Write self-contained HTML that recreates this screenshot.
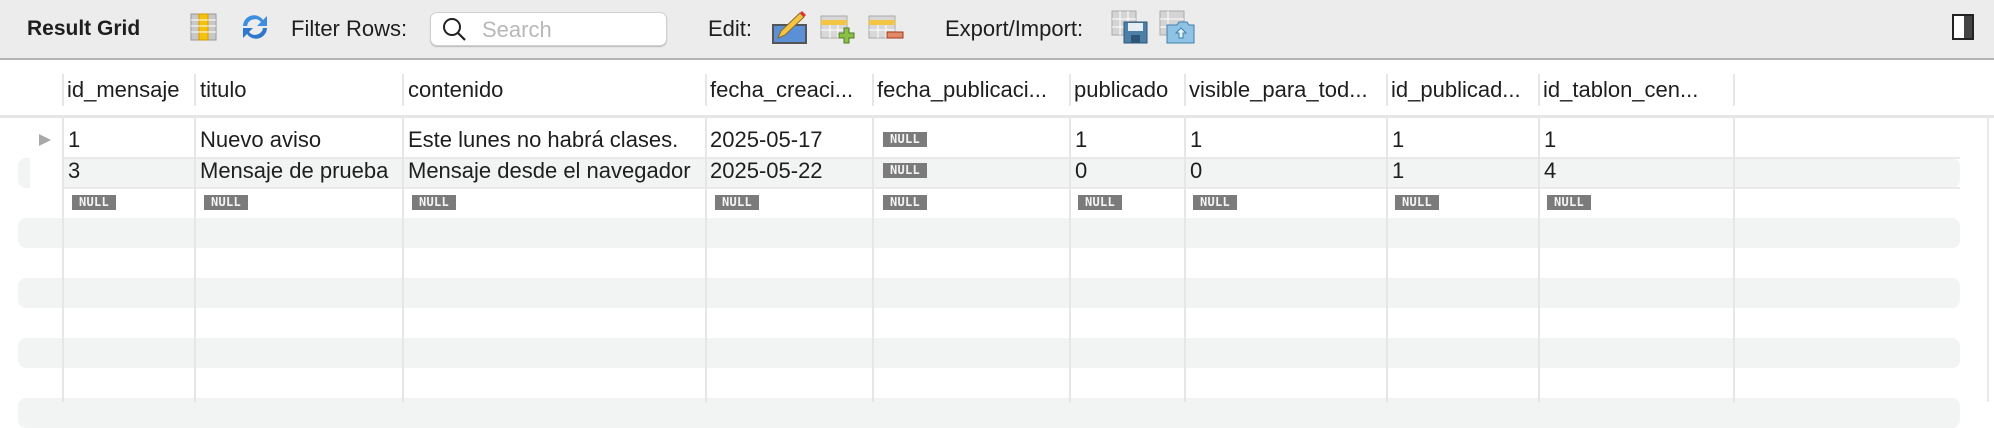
<!DOCTYPE html>
<html><head><meta charset="utf-8"><style>
*{margin:0;padding:0;box-sizing:border-box}
body{width:1994px;height:402px;overflow:hidden;background:#fff;font-family:"Liberation Sans",sans-serif;color:#1e1e1e;position:relative}
.tb{position:absolute;left:0;top:0;width:1994px;height:60px;background:#ececec;border-bottom:2px solid #b4b4b4}
.t{position:absolute;font-size:22px;top:16px;line-height:26px}
.abs{position:absolute}
.vl{position:absolute;width:2px;background:#e6e6e6}
.hd{position:absolute;top:77px;font-size:22px;line-height:26px}
.c{position:absolute;font-size:22px;line-height:26px}
.n{position:absolute;width:44px;height:15px;background:#7b7b7b;color:#f4f4f4;font-size:12px;font-weight:bold;line-height:15px;text-align:center;letter-spacing:0.3px;font-family:"DejaVu Sans Mono",monospace}
.band{position:absolute;left:18px;width:1942px;height:30px;background:#f2f3f3;border-radius:8px}
</style></head><body>
<div class="tb"></div>
<div class="t" style="left:27px;font-weight:bold;font-size:21px">Result Grid</div>
<svg class="abs" style="left:190px;top:13px" width="27" height="28" viewBox="0 0 27 28"><rect x="1" y="1" width="25" height="26" fill="#c8c8c8" stroke="#999"/><rect x="9" y="1" width="9" height="26" fill="#f4c20d" stroke="#d59a00"/><g stroke="#fff"><line x1="1" y1="7" x2="26" y2="7"/><line x1="1" y1="13" x2="26" y2="13"/><line x1="1" y1="19" x2="26" y2="19"/></g></svg>
<svg class="abs" style="left:239px;top:12px" width="32" height="30" viewBox="0 0 32 30"><path d="M4 14 A11 11 0 0 1 24 8 L28 4 L28 14 L18 14 L22 10 A8 8 0 0 0 8 14Z" fill="#3d8de0"/><path d="M28 16 A11 11 0 0 1 8 22 L4 26 L4 16 L14 16 L10 20 A8 8 0 0 0 24 16Z" fill="#2f77cc"/></svg>
<div class="t" style="left:291px">Filter Rows:</div>
<div class="abs" style="left:430px;top:12px;width:237px;height:34px;background:#fff;border:1px solid #d0d0d0;border-radius:7px;box-shadow:0 1px 1px #bbb"></div>
<svg class="abs" style="left:442px;top:17px" width="26" height="26" viewBox="0 0 26 26"><circle cx="10" cy="10" r="8" fill="none" stroke="#222" stroke-width="2"/><line x1="16" y1="16" x2="23" y2="23" stroke="#222" stroke-width="2.2"/></svg>
<div class="t" style="left:482px;color:#b8b8b8;top:17px">Search</div>
<div class="t" style="left:708px">Edit:</div>
<svg class="abs" style="left:772px;top:10px" width="36" height="34" viewBox="0 0 36 34"><rect x="1" y="15" width="33" height="18" fill="#5b8fd6" stroke="#555" stroke-width="2"/><path d="M6 28 L9 21 L28 3 L32 7 L13 25Z" fill="#f4c542" stroke="#8a6a2a"/><path d="M28 3 L30 1 L34 5 L32 7Z" fill="#d33"/></svg>
<svg class="abs" style="left:820px;top:14px" width="37" height="30" viewBox="0 0 37 30"><rect x="1" y="2" width="26" height="22" fill="#d8d8d8" stroke="#aaa"/><rect x="1" y="6" width="26" height="5" fill="#f4c542"/><g stroke="#fff"><line x1="1" y1="16" x2="27" y2="16"/><line x1="10" y1="11" x2="10" y2="24"/><line x1="18" y1="11" x2="18" y2="24"/></g><path d="M24 14h5v5h5v5h-5v5h-5v-5h-5v-5h5z" fill="#8cc04a" stroke="#4e7d22"/></svg>
<svg class="abs" style="left:868px;top:14px" width="37" height="30" viewBox="0 0 37 30"><rect x="1" y="2" width="26" height="22" fill="#d8d8d8" stroke="#aaa"/><rect x="1" y="6" width="26" height="5" fill="#f4c542"/><g stroke="#fff"><line x1="1" y1="16" x2="27" y2="16"/><line x1="10" y1="11" x2="10" y2="24"/><line x1="18" y1="11" x2="18" y2="24"/></g><rect x="19" y="18" width="16" height="6" fill="#e08a6a" stroke="#a03a1a"/></svg>
<div class="t" style="left:945px">Export/Import:</div>
<svg class="abs" style="left:1111px;top:10px" width="37" height="34" viewBox="0 0 37 34"><rect x="1" y="1" width="24" height="24" fill="#d4d4d4" stroke="#aaa"/><g stroke="#fff"><line x1="1" y1="9" x2="25" y2="9"/><line x1="1" y1="17" x2="25" y2="17"/><line x1="9" y1="1" x2="9" y2="25"/><line x1="17" y1="1" x2="17" y2="25"/></g><rect x="13" y="12" width="23" height="21" fill="#4e7fa6" stroke="#2d5578"/><rect x="17" y="13" width="15" height="8" fill="#e6eef5"/><rect x="20" y="25" width="9" height="8" fill="#2d5578"/></svg>
<svg class="abs" style="left:1159px;top:10px" width="37" height="34" viewBox="0 0 37 34"><rect x="1" y="1" width="24" height="24" fill="#d4d4d4" stroke="#aaa"/><g stroke="#fff"><line x1="1" y1="9" x2="25" y2="9"/><line x1="1" y1="17" x2="25" y2="17"/><line x1="9" y1="1" x2="9" y2="25"/></g><path d="M8 15h10l2 -3h8l2 3h5v18h-27z" fill="#8ec3e6" stroke="#3f7fa8"/><path d="M22 18l-5 5h3v5h4v-5h3z" fill="#e8f4fb" stroke="#3f7fa8"/></svg>
<div class="abs" style="left:1952px;top:14px;width:22px;height:26px;border:2px solid #222;background:linear-gradient(90deg,#fff 0 55%,#444 55% 100%)"></div>

<div class="abs" style="left:0;top:115px;width:1994px;height:3px;background:#e6e6e6"></div>
<div class="band" style="top:158px"></div>
<div class="abs" style="left:30px;top:158px;width:33px;height:30px;background:#fff"></div>
<div class="band" style="top:218px"></div>
<div class="band" style="top:278px"></div>
<div class="band" style="top:338px"></div>
<div class="band" style="top:398px"></div>
<div class="abs" style="left:63px;top:157px;width:1897px;height:2px;background:#eaeaea"></div>
<div class="abs" style="left:63px;top:187px;width:1897px;height:2px;background:#eaeaea"></div>
<div class="abs" style="left:1987px;top:118px;width:2px;height:284px;background:#eaeaea"></div>

<div class="vl" style="left:62px;top:74px;height:32px"></div><div class="vl" style="left:62px;top:118px;height:284px"></div>
<div class="vl" style="left:194px;top:74px;height:32px"></div><div class="vl" style="left:194px;top:118px;height:284px"></div>
<div class="vl" style="left:402px;top:74px;height:32px"></div><div class="vl" style="left:402px;top:118px;height:284px"></div>
<div class="vl" style="left:705px;top:74px;height:32px"></div><div class="vl" style="left:705px;top:118px;height:284px"></div>
<div class="vl" style="left:872px;top:74px;height:32px"></div><div class="vl" style="left:872px;top:118px;height:284px"></div>
<div class="vl" style="left:1069px;top:74px;height:32px"></div><div class="vl" style="left:1069px;top:118px;height:284px"></div>
<div class="vl" style="left:1184px;top:74px;height:32px"></div><div class="vl" style="left:1184px;top:118px;height:284px"></div>
<div class="vl" style="left:1386px;top:74px;height:32px"></div><div class="vl" style="left:1386px;top:118px;height:284px"></div>
<div class="vl" style="left:1538px;top:74px;height:32px"></div><div class="vl" style="left:1538px;top:118px;height:284px"></div>
<div class="vl" style="left:1733px;top:74px;height:32px"></div><div class="vl" style="left:1733px;top:118px;height:284px"></div>

<div class="hd" style="left:67px">id_mensaje</div>
<div class="hd" style="left:200px">titulo</div>
<div class="hd" style="left:408px">contenido</div>
<div class="hd" style="left:710px">fecha_creaci...</div>
<div class="hd" style="left:877px">fecha_publicaci...</div>
<div class="hd" style="left:1074px">publicado</div>
<div class="hd" style="left:1189px">visible_para_tod...</div>
<div class="hd" style="left:1391px">id_publicad...</div>
<div class="hd" style="left:1543px">id_tablon_cen...</div>

<svg class="abs" style="left:38px;top:133px" width="14" height="14"><path d="M1 1 L13 7 L1 13Z" fill="#a8a8a8"/></svg>
<div class="c" style="top:127px;left:68px">1</div>
<div class="c" style="top:127px;left:200px">Nuevo aviso</div>
<div class="c" style="top:127px;left:408px">Este lunes no habrá clases.</div>
<div class="c" style="top:127px;left:710px">2025-05-17</div>
<div class="n" style="top:132px;left:883px">NULL</div>
<div class="c" style="top:127px;left:1075px">1</div>
<div class="c" style="top:127px;left:1190px">1</div>
<div class="c" style="top:127px;left:1392px">1</div>
<div class="c" style="top:127px;left:1544px">1</div>

<div class="c" style="top:158px;left:68px">3</div>
<div class="c" style="top:158px;left:200px">Mensaje de prueba</div>
<div class="c" style="top:158px;left:408px">Mensaje desde el navegador</div>
<div class="c" style="top:158px;left:710px">2025-05-22</div>
<div class="n" style="top:163px;left:883px">NULL</div>
<div class="c" style="top:158px;left:1075px">0</div>
<div class="c" style="top:158px;left:1190px">0</div>
<div class="c" style="top:158px;left:1392px">1</div>
<div class="c" style="top:158px;left:1544px">4</div>

<div class="n" style="top:195px;left:72px">NULL</div>
<div class="n" style="top:195px;left:204px">NULL</div>
<div class="n" style="top:195px;left:412px">NULL</div>
<div class="n" style="top:195px;left:715px">NULL</div>
<div class="n" style="top:195px;left:883px">NULL</div>
<div class="n" style="top:195px;left:1078px">NULL</div>
<div class="n" style="top:195px;left:1193px">NULL</div>
<div class="n" style="top:195px;left:1395px">NULL</div>
<div class="n" style="top:195px;left:1547px">NULL</div>
</body></html>
